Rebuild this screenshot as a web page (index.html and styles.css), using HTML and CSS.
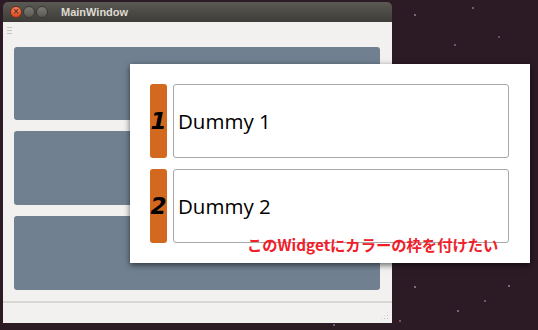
FILE: index.html
```html
<!DOCTYPE html>
<html lang="ja">
<head>
    <meta charset="UTF-8">
    <title>MainWindow</title>
    <link rel="stylesheet" href="styles.css">
</head>
<body>

<div class="desktop">
    <div class="window">
        <div class="titlebar">
            <span class="btn btn-close">×</span>
            <span class="btn btn-min"></span>
            <span class="btn btn-max"></span>
            <span class="title">MainWindow</span>
        </div>
        <div class="body">
            <div class="toolbar"><span class="handle"></span></div>
            <div class="panels">
                <div class="panel"></div>
                <div class="panel"></div>
                <div class="panel"></div>
            </div>
            <div class="statusbar"><span class="grip"></span></div>
        </div>
    </div>

    <div class="popup">
        <div class="row">
            <div class="tag">1</div>
            <div class="edit">Dummy 1</div>
        </div>
        <div class="row">
            <div class="tag">2</div>
            <div class="edit">Dummy 2</div>
        </div>
        <p class="note">このWidgetにカラーの枠を付けたい</p>
    </div>
</div>

</body>
</html>
```

FILE: styles.css
```css
* {
    margin: 0;
    padding: 0;
    box-sizing: border-box;
}

body {
    width: 538px;
    height: 330px;
    overflow: hidden;
    background-color: #2c1a24;
}

.desktop {
    position: relative;
    width: 538px;
    height: 330px;
    padding: 2px 0 0 3px;
    background-color: #2c1a24;
    background-image:
        radial-gradient(circle at 415px 15px, #b9a9c8 0, transparent 1.5px),
        radial-gradient(circle at 473px 8px, #a89ac0 0, transparent 1.5px),
        radial-gradient(circle at 455px 45px, #9d8fb8 0, transparent 1.5px),
        radial-gradient(circle at 499px 37px, #8f7fb6 0, transparent 1.5px),
        radial-gradient(circle at 509px 286px, #bfb0d8 0, transparent 1.5px),
        radial-gradient(circle at 415px 287px, #c9b6e0 0, transparent 1.5px),
        radial-gradient(circle at 485px 301px, #a390c8 0, transparent 1.5px),
        radial-gradient(circle at 458px 311px, #b8a8d6 0, transparent 1.5px),
        radial-gradient(circle at 400px 321px, #d08090 0, transparent 1.5px),
        radial-gradient(circle at 334px 325px, #a898d0 0, transparent 1.5px);
}

.window {
    width: 389px;
    height: 321px;
    display: flex;
    flex-direction: column;
    border-radius: 5px 5px 0 0;
    overflow: hidden;
}

.titlebar {
    height: 20px;
    display: flex;
    align-items: center;
    padding-left: 7px;
    gap: 1px;
    background: linear-gradient(#5a5954, #3d3c38);
    font-family: "Liberation Sans", sans-serif;
}

.btn {
    width: 12px;
    height: 12px;
    border-radius: 50%;
    background: linear-gradient(#7b7a73, #5a5953);
    border: 1px solid #3a3935;
    font-size: 10px;
    line-height: 10px;
    text-align: center;
    color: #3a2a20;
}

.btn-close {
    background: linear-gradient(#f2805a, #dc4a20);
    border-color: #7a2e18;
}

.title {
    margin-left: 12px;
    color: #dfdbd2;
    font-size: 11px;
    font-weight: bold;
}

.body {
    flex: 1;
    display: flex;
    flex-direction: column;
    background-color: #f2f1f0;
}

.toolbar {
    height: 25px;
    padding: 5px 0 0 4px;
}

.handle {
    display: block;
    width: 5px;
    height: 7px;
    background: repeating-linear-gradient(#c8c6c2 0 1px, transparent 1px 3px);
}

.panels {
    display: flex;
    flex-direction: column;
    gap: 11px;
    padding: 0 12px 0 11px;
}

.panel {
    height: 74px;
    background-color: #708090;
    border-radius: 3px;
}

.panel:first-child {
    height: 73px;
}

.statusbar {
    margin-top: 11px;
    flex: 1;
    border-top: 2px solid #d9d7d4;
    position: relative;
}

.grip {
    position: absolute;
    right: 3px;
    bottom: 3px;
    width: 9px;
    height: 9px;
    background: radial-gradient(circle, #c4c2be 0.8px, transparent 1px) 0 0 / 3px 3px;
    clip-path: polygon(100% 0, 100% 100%, 0 100%);
}

.popup {
    position: absolute;
    left: 130px;
    top: 64px;
    width: 400px;
    height: 199px;
    background-color: #ffffff;
    box-shadow: 0 2px 6px rgba(0, 0, 0, 0.6);
    padding: 20px 21px 0 20px;
    display: flex;
    flex-direction: column;
    gap: 11px;
}

.row {
    display: flex;
    gap: 6px;
    height: 74px;
}

.tag {
    width: 17px;
    background-color: #d2691e;
    border-radius: 3px;
    display: flex;
    align-items: center;
    justify-content: center;
    font-family: "DejaVu Sans", sans-serif;
    font-size: 23px;
    font-weight: bold;
    font-style: italic;
    color: #000;
}

.edit {
    flex: 1;
    border: 1px solid #a8a8a8;
    border-radius: 3px;
    display: flex;
    align-items: center;
    padding-left: 4px;
    font-family: "Open Sans", sans-serif;
    font-size: 20.5px;
    color: #000;
}

.note {
    position: absolute;
    left: 117px;
    top: 170px;
    font-family: "Noto Sans CJK JP", sans-serif;
    font-size: 15.3px;
    font-weight: bold;
    color: #f0202a;
    line-height: 20px;
}
```
